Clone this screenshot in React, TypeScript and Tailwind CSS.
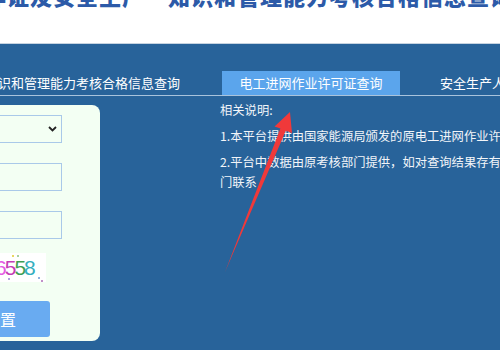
import React from 'react';

const font = { fontFamily: '"Noto Sans CJK SC", "Noto Sans", sans-serif' };

const Chevron: React.FC = () => (
  <svg width="9" height="6" viewBox="0 0 9 6" fill="none">
    <path d="M1 1l3.5 3.5L8 1" stroke="#222" strokeWidth="1.8" />
  </svg>
);

const App: React.FC = () => {
  const notes = [
    '相关说明:',
    '1.本平台提供由国家能源局颁发的原电工进网作业许可证信息查询',
    '2.平台中数据由原考核部门提供，如对查询结果存有异议，请与原考核部门联系',
  ];

  return (
    <div className="relative w-[500px] h-[350px] overflow-hidden flex flex-col bg-[#28639a]" style={font}>
      {/* header */}
      <div className="h-[44px] shrink-0 bg-white border-b border-[#c6d3e0] overflow-hidden">
        <div className="-mt-[16px] -ml-[16px] whitespace-nowrap text-[22px] leading-[22px] font-black tracking-[1px] text-[#2c5aa8]">
          作证及安全生产　知识和管理能力考核合格信息查询
        </div>
      </div>

      {/* tabs */}
      <div className="flex items-end pt-[27px] border-b border-[#a9c3dc] whitespace-nowrap text-[13px] text-white">
        <div className="-ml-[67px] pr-[42px] h-[24px] leading-[24px]">安全生产知识和管理能力考核合格信息查询</div>
        <div className="w-[178px] shrink-0 h-[24px] leading-[24px] text-center bg-[#5ba5ec]">电工进网作业许可证查询</div>
        <div className="pl-[40px] h-[24px] leading-[24px]">安全生产人员考核合格信息查询</div>
      </div>

      {/* content */}
      <div className="flex items-start pt-[4px]">
        <div className="-ml-[150px] mt-[5px] w-[250px] h-[236px] shrink-0 rounded-[8px] bg-[#f3fff3] pt-[10px] pl-[12px]">
          <div className="w-[200px] h-[28px] border border-[#a9c9e9] flex items-center justify-end pr-[4px]">
            <Chevron />
          </div>
          <div className="mt-[20px] w-[200px] h-[28px] border border-[#a9c9e9]" />
          <div className="mt-[20px] w-[200px] h-[28px] border border-[#a9c9e9]" />
          <div className="mt-[14px] flex gap-[8px]">
            <div className="w-[118px] h-[29px] border border-[#a9c9e9]" />
            <div className="relative w-[58px] h-[29px] bg-white pl-[7px] flex items-center text-[21px] leading-none tracking-[-2px]" style={{ fontFamily: '"Liberation Sans", sans-serif' }}>
              <span className="text-[#e45ae4]">6</span>
              <span className="text-[#c43cb6]">5</span>
              <span className="text-[#3e9e52]">5</span>
              <span className="text-[#35aebe]">8</span>
              <span className="absolute left-[24px] top-[2px] w-[2px] h-[2px] bg-[#e8d860]" />
              <span className="absolute left-[29px] top-[2px] w-[2px] h-[2px] bg-[#a8d0a0]" />
              <span className="absolute left-[53px] top-[27px] w-[2px] h-[2px] bg-[#c090c8]" />
              <span className="absolute left-[50px] top-[24px] w-[2px] h-[2px] bg-[#90b0e0]" />
              <span className="absolute left-[20px] top-[25px] w-[2px] h-[2px] bg-[#b0a0e0]" />
            </div>
          </div>
          <div className="mt-[19px] flex gap-[8px] text-[16px] text-white">
            <div className="w-[80px] h-[36px] rounded-[3px] bg-[#69abf1] flex items-center justify-center">查询</div>
            <div className="w-[100px] h-[36px] rounded-[3px] bg-[#69abf1] flex items-center justify-center">重置</div>
          </div>
        </div>

        <div className="ml-[120px] w-[392px] shrink-0 text-[12.3px] leading-[20px] text-[#f2f5f9]">
          {notes.map((n, i) => (
            <p key={i} className={i === 0 ? '' : 'mt-[6px]'}>{n}</p>
          ))}
        </div>
      </div>

      {/* red arrow annotation */}
      <svg className="absolute left-0 top-0 pointer-events-none" width="500" height="350" viewBox="0 0 500 350">
        <polygon
          points="290,112 292,133 285.8,130.8 225,272 280.4,128.6 274.5,126.4"
          fill="#f0393a"
        />
      </svg>
    </div>
  );
};

export default App;
